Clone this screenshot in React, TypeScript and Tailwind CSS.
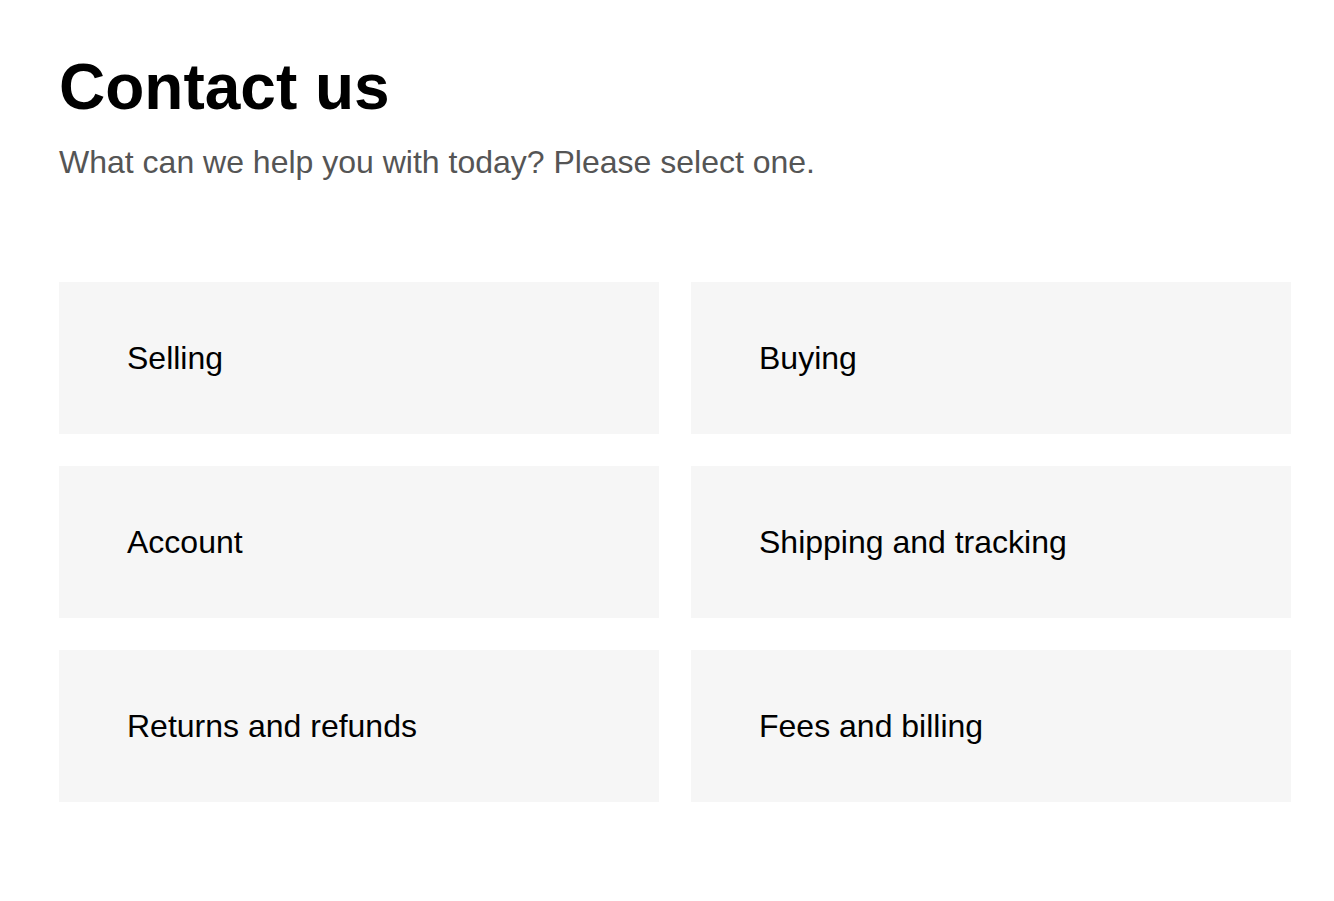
const topics = [
  "Selling",
  "Buying",
  "Account",
  "Shipping and tracking",
  "Returns and refunds",
  "Fees and billing",
];

export default function App() {
  return (
    <div
      className="min-h-screen bg-white px-[59px] pt-[55px] text-black"
      style={{ fontFamily: '"Liberation Sans", Arial, sans-serif' }}
    >
      <h1 className="text-[64px] font-bold leading-[64px]">Contact us</h1>
      <p className="mt-[23px] text-[32px] leading-[40px] text-[#555555]">
        What can we help you with today? Please select one.
      </p>

      <div className="mt-[100px] grid w-[1232px] grid-cols-2 gap-8">
        {topics.map((topic) => (
          <button
            key={topic}
            className="flex h-[152px] items-center bg-[#f6f6f6] pl-[68px] text-left text-[32px] leading-[40px] text-black"
          >
            {topic}
          </button>
        ))}
      </div>
    </div>
  );
}
